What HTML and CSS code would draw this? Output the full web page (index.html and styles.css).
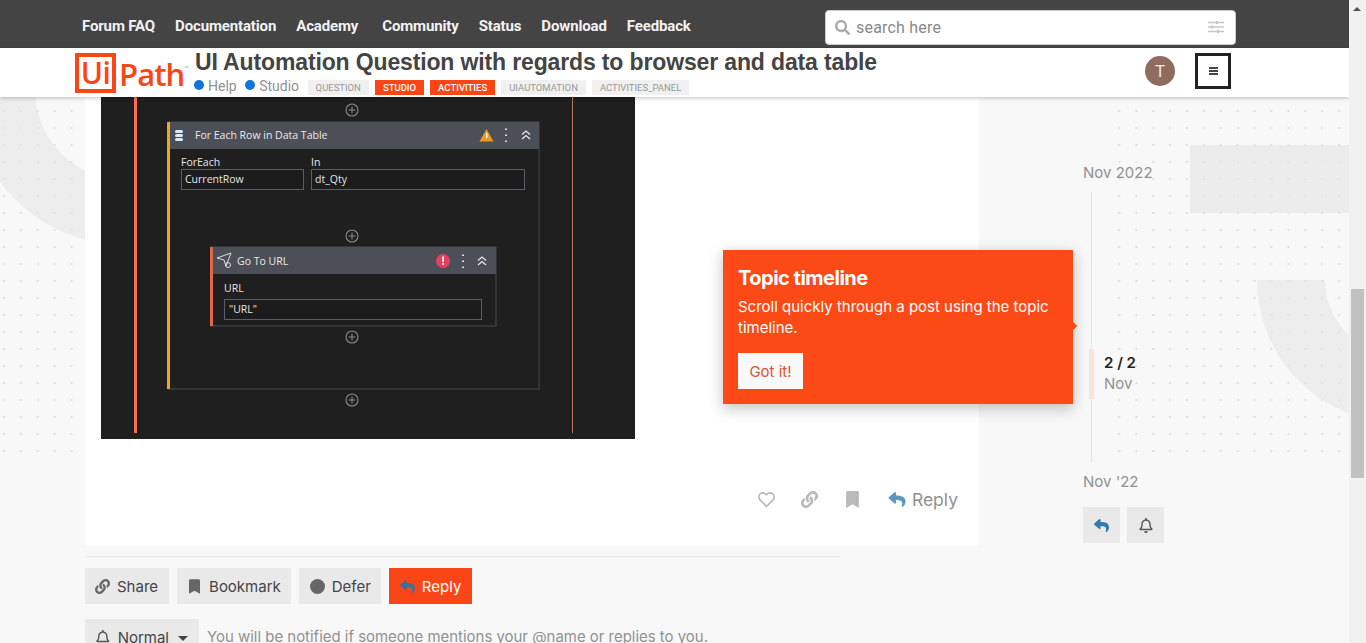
FILE: index.html
```
<!DOCTYPE html>
<html lang="en">
<head>
  <meta charset="UTF-8" />
  <title>UI Automation Question with regards to browser and data table</title>
  <link rel="stylesheet" href="styles.css">
</head>
<body>
  <svg class="icon-defs" width="0" height="0">
    <symbol id="i-reply" viewBox="0 0 512 512"><path d="M8.309 189.836L184.313 37.851C199.719 24.546 224 35.347 224 56.015v80.053c160.629 1.839 288 34.032 288 186.258 0 61.441-39.581 122.309-83.333 154.132-13.653 9.931-33.111-2.533-28.077-18.631 45.344-145.012-21.507-183.51-176.59-185.742V360c0 20.7-24.3 31.453-39.687 18.164l-176.004-152c-11.071-9.562-11.086-26.753 0-36.328z"/></symbol>
    <symbol id="i-link" viewBox="0 0 512 512"><path d="M326.612 185.391c59.747 59.809 58.927 155.698.36 214.59-.11.12-.24.25-.36.37l-67.2 67.2c-59.27 59.27-155.699 59.262-214.96 0-59.27-59.26-59.27-155.7 0-214.96l37.106-37.106c9.84-9.84 26.786-3.3 27.294 10.606.648 17.722 3.826 35.527 9.69 52.721 1.986 5.822.567 12.262-3.783 16.612l-13.087 13.087c-28.026 28.026-28.905 73.66-1.155 101.96 28.024 28.579 74.086 28.749 102.325.51l67.2-67.19c28.191-28.191 28.073-73.757 0-101.83-3.701-3.694-7.429-6.564-10.341-8.569a16.037 16.037 0 0 1-6.947-12.606c-.396-10.567 3.348-21.456 11.698-29.806l21.054-21.055c5.521-5.521 14.182-6.199 20.584-1.731a152.482 152.482 0 0 1 20.522 17.197zM467.547 44.449c-59.261-59.262-155.69-59.27-214.96 0l-67.2 67.2c-.12.12-.25.25-.36.37-58.566 58.892-59.387 154.781.36 214.59a152.454 152.454 0 0 0 20.521 17.196c6.402 4.468 15.064 3.789 20.584-1.731l21.054-21.055c8.35-8.35 12.094-19.239 11.698-29.806a16.037 16.037 0 0 0-6.947-12.606c-2.912-2.005-6.64-4.875-10.341-8.569-28.073-28.073-28.191-73.639 0-101.83l67.2-67.19c28.239-28.239 74.3-28.069 102.325.51 27.75 28.3 26.872 73.934-1.155 101.96l-13.087 13.087c-4.35 4.35-5.769 10.79-3.783 16.612 5.864 17.194 9.042 34.999 9.69 52.721.509 13.906 17.454 20.446 27.294 10.606l37.106-37.106c59.271-59.259 59.271-155.699.001-214.959z"/></symbol>
    <symbol id="i-heart" viewBox="0 0 512 512"><path d="M458.4 64.3C400.6 15.7 311.3 23 256 79.3 200.7 23 111.4 15.6 53.6 64.3-21.6 127.6-10.6 230.8 43 285.5l175.4 178.7c10 10.2 23.4 15.9 37.6 15.9 14.3 0 27.6-5.6 37.6-15.8L469 285.6c53.5-54.7 64.7-157.9-10.6-221.3zm-23.6 187.5L259.4 430.5c-2.4 2.4-4.4 2.4-6.8 0L77.2 251.8c-36.5-37.2-43.9-107.6 7.3-150.7 38.9-32.7 98.9-27.8 136.5 10.5l35 35.7 35-35.7c37.8-38.5 97.8-43.2 136.5-10.6 51.1 43.1 43.5 113.9 7.3 150.8z"/></symbol>
    <symbol id="i-bookmark" viewBox="0 0 384 512"><path d="M0 512V48C0 21.49 21.49 0 48 0h288c26.51 0 48 21.49 48 48v464L192 400 0 512z"/></symbol>
    <symbol id="i-bell" viewBox="0 0 448 512"><path d="M439.39 362.29c-19.32-20.76-55.47-51.99-55.47-154.29 0-77.7-54.48-139.9-127.94-155.16V32c0-17.67-14.32-32-31.98-32s-31.98 14.33-31.98 32v20.84C118.56 68.1 64.08 130.3 64.08 208c0 102.3-36.15 133.53-55.47 154.29-6 6.45-8.66 14.16-8.61 21.71.11 16.4 12.98 32 32.1 32h383.8c19.12 0 32-15.6 32.1-32 .05-7.55-2.61-15.27-8.61-21.71zM67.53 368c21.22-27.97 44.42-74.33 44.53-159.42 0-.2-.06-.38-.06-.58 0-61.86 50.14-112 112-112s112 50.14 112 112c0 .2-.06.38-.06.58.11 85.1 23.31 131.46 44.53 159.42H67.53zM224 512c35.32 0 63.97-28.65 63.97-64H160.03c0 35.35 28.65 64 63.97 64z"/></symbol>
    <symbol id="i-search" viewBox="0 0 512 512"><path d="M505 442.7L405.3 343c-4.5-4.5-10.6-7-17-7H372c27.6-35.3 44-79.7 44-128C416 93.1 322.9 0 208 0S0 93.1 0 208s93.1 208 208 208c48.3 0 92.7-16.4 128-44v16.3c0 6.4 2.5 12.5 7 17l99.7 99.7c9.4 9.4 24.6 9.4 33.9 0l28.3-28.3c9.4-9.4 9.4-24.6.1-34zM208 336c-70.7 0-128-57.2-128-128 0-70.7 57.2-128 128-128 70.7 0 128 57.2 128 128 0 70.7-57.2 128-128 128z"/></symbol>
  </svg>

  <!-- page decoration behind everything -->
  <svg class="backdrop" width="1349" height="643" viewBox="0 0 1349 643">
    <defs>
      <pattern id="dots" x="3" y="8" width="16.9" height="17" patternUnits="userSpaceOnUse">
        <rect x="0" y="0" width="2" height="2" fill="#e2e2e2"/>
      </pattern>
    </defs>
    <path d="M125 90m-155 0a155 155 0 1 0 310 0a155 155 0 1 0 -310 0zM125 90m-90 0a90 90 0 1 1 180 0a90 90 0 1 1 -180 0z" fill="#ededed" fill-rule="evenodd"/>
    <rect x="1190" y="145" width="159" height="68" fill="#ececec"/>
    <path d="M1257 280A143 143 0 0 0 1543 280H1475A75 75 0 0 1 1325 280Z" fill="#ededed"/>
    <rect x="0" y="100" width="85" height="352" fill="url(#dots)"/>
    <rect x="1105" y="100" width="244" height="352" fill="url(#dots)"/>
  </svg>

  <div class="top-bar">
    <nav class="top-nav">
      <a>Forum FAQ</a>
      <a>Documentation</a>
      <a class="nav-academy">Academy</a>
      <a>Community</a>
      <a>Status</a>
      <a>Download</a>
      <a>Feedback</a>
    </nav>
    <div class="search-box">
      <svg class="search-icon"><use href="#i-search"/></svg>
      <span class="search-text">search here</span>
      <svg class="search-opts" viewBox="0 0 16 14" width="16" height="14">
        <path d="M0 2.5h16M0 7h16M0 11.5h16" stroke="#c6c6c6" stroke-width="1.4"/>
        <path d="M9 1v3M4 5.5v3M10 10v3" stroke="#c6c6c6" stroke-width="2"/>
      </svg>
    </div>
  </div>

  <header class="topic-bar">
    <div class="logo">
      <span class="logo-ui">Ui</span><span class="logo-path">Path</span><span class="logo-tm">™</span>
    </div>
    <div class="topic-info">
      <h1>UI Automation Question with regards to browser and data table</h1>
      <div class="topic-meta">
        <span class="cat"><i class="cat-dot"></i>Help</span>
        <span class="cat"><i class="cat-dot"></i>Studio</span>
        <span class="tag">QUESTION</span>
        <span class="tag tag-hot">STUDIO</span>
        <span class="tag tag-hot">ACTIVITIES</span>
        <span class="tag">UIAUTOMATION</span>
        <span class="tag">ACTIVITIES_PANEL</span>
      </div>
    </div>
    <div class="avatar">T</div>
    <div class="menu-btn"><span class="burger"></span></div>
  </header>

  <div class="page">
    <main class="post-col">
      <article class="post">
        <svg class="shot" width="534" height="342" viewBox="101 97 534 342">
          <rect x="101" y="97" width="534" height="342" fill="#1f1f20"/>
          <rect x="134" y="97" width="3" height="336" fill="#f8704f"/>
          <rect x="572" y="97" width="1" height="336" fill="#b8755e"/>

          <g class="plus"><circle cx="352" cy="110" r="6"/><path d="M352 106.500v7M348.500 110h7"/></g>
          <rect x="169" y="122" width="370" height="267" fill="#1f1f20" stroke="#484b50"/>
          <rect x="167" y="122" width="3" height="267" fill="#eda81c"/>
          <rect x="170" y="122" width="369" height="27" fill="#4c4f57"/>
          <rect x="173" y="129" width="12" height="13" fill="#3e5270"/>
          <rect x="175" y="130" width="8" height="3" rx="1.500" fill="#e8e8e8"/>
          <rect x="175" y="134" width="8" height="3" rx="1.500" fill="#e8e8e8"/>
          <rect x="175" y="138" width="8" height="3" rx="1.500" fill="#e8e8e8"/>
          <text class="node-title" x="195" y="139">For Each Row in Data Table</text>
          <path d="M486.500 129l7 12.500h-14z" fill="#e99a1f"/>
          <rect x="486" y="133" width="1.500" height="5" fill="#fff"/>
          <path d="M506 128.500v1.500M506 134.500v1.500M506 140.500v1.500" stroke="#ddd" stroke-width="2"/>
          <path class="chev" d="M522 134.500l4-3.500 4 3.500M522 139l4-3.500 4 3.500"/>

          <text class="field-label" x="181" y="166">ForEach</text>
          <rect class="field" x="181.500" y="169.500" width="122" height="20"/>
          <text class="field-value" x="185" y="183">CurrentRow</text>
          <text class="field-label" x="311" y="166">In</text>
          <rect class="field" x="311.500" y="169.500" width="213" height="20"/>
          <text class="field-value" x="315" y="183">dt_Qty</text>

          <g class="plus"><circle cx="352" cy="236" r="6"/><path d="M352 232.500v7M348.500 236h7"/></g>

          <rect x="211" y="247" width="285" height="79" fill="#1f1f20" stroke="#484b50"/>
          <rect x="210" y="247" width="3" height="79" fill="#e2684c"/>
          <rect x="213" y="247" width="283" height="27" fill="#4c4f57"/>
          <path d="M217 258l14-5-5 13-2-6z" fill="none" stroke="#ddd"/>
          <circle cx="228" cy="265" r="2.500" fill="none" stroke="#ddd"/>
          <text class="node-title" x="237" y="265">Go To URL</text>
          <circle cx="443" cy="261" r="7" fill="#e2405c"/>
          <rect x="442.200" y="256.500" width="1.800" height="5.500" fill="#fff"/>
          <rect x="442.200" y="263" width="1.800" height="1.800" fill="#fff"/>
          <path d="M463 254.500v1.500M463 260.500v1.500M463 266.500v1.500" stroke="#ddd" stroke-width="2"/>
          <path class="chev" d="M478 260.500l4-3.500 4 3.500M478 265l4-3.500 4 3.500"/>
          <text class="field-label" x="224" y="292">URL</text>
          <rect class="field" x="224.500" y="299.500" width="257" height="20"/>
          <text class="field-value" x="229" y="313">"URL"</text>

          <g class="plus"><circle cx="352" cy="337" r="6"/><path d="M352 333.500v7M348.500 337h7"/></g>
          <g class="plus"><circle cx="352" cy="400" r="6"/><path d="M352 396.500v7M348.500 400h7"/></g>
        </svg>

        <div class="post-actions">
          <svg class="act act-heart"><use href="#i-heart"/></svg>
          <svg class="act act-link"><use href="#i-link"/></svg>
          <svg class="act act-mark"><use href="#i-bookmark"/></svg>
          <span class="act-reply"><svg class="reply-arrow"><use href="#i-reply"/></svg>Reply</span>
        </div>
      </article>

      <div class="topic-footer">
        <div class="footer-btns">
          <span class="btn"><svg class="btn-icon"><use href="#i-link"/></svg>Share</span>
          <span class="btn btn-mark"><svg class="btn-icon btn-icon-mark"><use href="#i-bookmark"/></svg>Bookmark</span>
          <span class="btn btn-defer"><i class="defer-dot"></i>Defer</span>
          <span class="btn btn-primary"><svg class="btn-icon btn-icon-reply"><use href="#i-reply"/></svg>Reply</span>
        </div>
        <div class="notify-row">
          <span class="btn btn-notify"><svg class="btn-icon btn-icon-bell"><use href="#i-bell"/></svg>Normal<i class="caret"></i></span>
          <span class="notify-text">You will be notified if someone mentions your @name or replies to you.</span>
        </div>
      </div>
    </main>

    <aside class="timeline">
      <div class="tl-date">Nov 2022</div>
      <div class="tl-track">
        <div class="tl-handle">
          <div class="tl-count">2 / 2</div>
          <div class="tl-month">Nov</div>
        </div>
      </div>
      <div class="tl-date tl-date-end">Nov '22</div>
      <div class="tl-btns">
        <span class="tl-btn"><svg class="tl-reply"><use href="#i-reply"/></svg></span>
        <span class="tl-btn"><svg class="tl-bell"><use href="#i-bell"/></svg></span>
      </div>
    </aside>
  </div>

  <div class="tip">
    <h3>Topic timeline</h3>
    <p>Scroll quickly through a post using the topic timeline.</p>
    <span class="tip-btn">Got it!</span>
    <i class="tip-arrow"></i>
  </div>

  <div class="scrollbar">
    <i class="scroll-up"></i>
    <i class="scroll-thumb"></i>
  </div>
</body>
</html>
```
FILE: styles.css
```
html, body { margin:0; padding:0; height:643px; overflow:hidden; }
body { font-family:Inter, "Liberation Sans", sans-serif; background:#f8f8f8; color:#444; position:relative; }
.icon-defs { position:absolute; }
.backdrop { position:absolute; left:0; top:0; }
svg { fill:currentColor; }

/* top dark bar */
.top-bar { position:relative; height:48px; width:1349px; background:#444; display:flex; align-items:center; box-sizing:border-box; padding-left:82px; }
.top-nav { display:flex; gap:20px; width:743px; padding-top:4px; font-family:Roboto, sans-serif; font-weight:700; font-size:15px; color:#f2f2f2; letter-spacing:-.14px; }
.nav-academy { margin-right:4px; }
.search-box { width:411px; height:35px; margin-top:6px; background:#fff; border:1px solid #ccc; border-radius:4px; box-sizing:border-box; display:flex; align-items:center; padding:0 11px 0 9px; }
.search-icon { width:15px; height:15px; color:#aaa; margin-right:6px; }
.search-text { flex:1; font-family:Roboto, sans-serif; font-size:16px; color:#888; letter-spacing:.2px; }

/* topic title bar */
.topic-bar { position:relative; z-index:2; height:49px; width:1349px; background:#fff; box-shadow:0 1px 4px rgba(0,0,0,.25); display:flex; box-sizing:border-box; padding-left:75px; }
.logo { width:120px; height:40px; margin-top:5px; display:flex; align-items:center; color:#fa4616; font-family:"Open Sans", sans-serif; font-weight:600; }
.logo-ui { width:41px; height:40px; box-sizing:border-box; border:4px solid #fa4616; display:flex; align-items:center; justify-content:center; font-size:30px; line-height:32px; letter-spacing:-.5px; }
.logo-path { font-size:31px; margin-left:3px; letter-spacing:-.9px; line-height:36px; margin-top:2px; }
.logo-tm { font-size:5px; align-self:flex-start; margin-top:12px; color:#999; font-weight:400; }
.topic-info { width:950px; }
.topic-info h1 { margin:0; font-family:"Liberation Sans", sans-serif; font-size:23px; letter-spacing:-.14px; line-height:29px; font-weight:700; color:#444; }
.topic-meta { display:flex; align-items:center; height:16px; margin:1px 0 0 -1px; font-family:Roboto, sans-serif; }
.cat { font-size:14px; color:#919191; display:flex; align-items:center; margin-right:8.500px; }
.cat-dot { width:10px; height:10px; border-radius:50%; background:#0e76d8; margin-right:4px; margin-top:-3px; }
.tag { font-size:9.500px; color:#999; background:#f0f0f0; padding:0 8px; height:15px; line-height:16px; margin-right:6px; margin-top:2px; }
.tag-hot { background:#fa4616; color:#fff; font-weight:500; }
.avatar { width:30px; height:30px; border-radius:50%; background:#8e6d5f; color:#f4e9df; font-family:Roboto, sans-serif; font-size:17px; line-height:30px; text-align:center; margin:8px 20px 0 0; }
.menu-btn { width:36px; height:36px; box-sizing:border-box; border:3px solid #222; margin-top:5px; display:flex; align-items:center; justify-content:center; }
.burger { width:9px; height:8px; box-sizing:border-box; border-top:2px solid #444; border-bottom:2px solid #444; position:relative; }
.burger:before { content:""; position:absolute; left:0; right:0; top:1px; height:2px; background:#444; }

/* main two column area */
.page { position:relative; display:flex; padding-left:85px; }
.post-col { width:894px; }
.post { background:#fff; height:449px; border-radius:0 0 4px 4px; padding-left:16px; display:flex; flex-direction:column; }
.shot { display:block; flex:none; }
.node-title { font:500 10.500px "Open Sans", sans-serif; fill:#eaeaea; }
.field-label, .field-value { font:10.500px "Open Sans", sans-serif; fill:#e6e6e6; }
.field { fill:#1c1c1d; stroke:#5b5f63; stroke-width:1; }
.plus circle, .plus path { fill:none; stroke:#8a8a8a; stroke-width:1.100; }
.chev { fill:none; stroke:#e6e6e6; stroke-width:1.300; }

.post-actions { display:flex; justify-content:flex-end; align-items:center; padding:50px 21px 0 0; color:#aaa; }
.act { width:17px; height:17px; color:#b9b9b9; }
.act-heart { margin-right:26px; }
.act-link { margin-right:28px; }
.act-mark { width:13px; height:17px; margin-right:29px; }
.act-reply { display:flex; align-items:center; font-size:17.500px; color:#919191; }
.reply-arrow { width:18px; height:17px; color:#5d97bc; margin-right:6px; }

.topic-footer { padding-top:10px; }
.footer-btns { width:755px; border-top:1px solid #e9e9e9; padding-top:11px; display:flex; gap:8px; }
.btn { display:flex; align-items:center; height:36px; padding:0 11px 0 10px; background:#e9e9e9; color:#444; font-size:15px; box-sizing:border-box; }
.btn-icon { width:15px; height:15px; color:#666; margin-right:7px; }
.btn-mark { padding-right:10px; }
.btn-icon-mark { width:11px; margin-left:2px; margin-right:9px; }
.btn-defer { padding-right:10px; }
.defer-dot { width:15px; height:15px; border-radius:50%; background:#666; margin-right:7px; margin-left:1px; }
.btn-primary { background:#fa4616; color:#fff; padding:0 11px; }
.btn-icon-reply { color:#3d6f97; }
.notify-row { display:flex; align-items:center; margin-top:15px; }
.btn-notify { height:36px; padding-left:11px; margin-right:8px; width:114px; }
.btn-icon-bell { width:14px; color:#555; margin-right:8px; }
.caret { margin-left:9px; margin-top:2px; border:5px solid transparent; border-top-color:#444; border-bottom:0; }
.notify-text { font-size:14.950px; color:#919191; }

/* timeline */
.timeline { margin-left:104px; padding-top:66px; width:100px; }
.tl-date { font-size:15px; line-height:20px; color:#919191; }
.tl-track { height:270px; margin-left:8px; border-left:1px solid #e4e4e4; margin-top:9px; padding-top:157px; box-sizing:border-box; }
.tl-handle { border-left:5px solid #fde0d7; margin-left:-3px; height:50px; padding:3px 0 0 10px; box-sizing:border-box; }
.tl-count { font-size:15px; font-weight:600; color:#222; line-height:22px; }
.tl-month { font-size:15px; line-height:20px; color:#919191; }
.tl-date-end { margin-top:10px; }
.tl-btns { display:flex; gap:7px; margin-top:15px; }
.tl-btn { width:37px; height:36px; background:#e9e9e9; display:flex; align-items:center; justify-content:center; }
.tl-reply { width:15px; height:15px; color:#2f7ab0; }
.tl-bell { width:14px; height:15px; color:#555; }

/* floating tip */
.tip { position:absolute; left:723px; top:250px; width:350px; height:154px; box-sizing:border-box; padding:16px 15px 0; background:#fc4a17; color:#fff; box-shadow:0 4px 14px rgba(0,0,0,.25); z-index:3; }
.tip h3 { margin:0 0 6px; font-size:20px; line-height:24px; font-weight:700; letter-spacing:-.5px; }
.tip p { margin:0; font-size:15px; line-height:21px; }
.tip-btn { display:inline-block; margin-top:15px; width:65px; height:36px; background:#f9f9f9; color:#d8532c; font-size:15px; line-height:37px; text-align:center; }
.tip-arrow { position:absolute; right:-3px; top:73px; width:6px; height:6px; background:#fc4a17; transform:rotate(45deg); }

/* browser scrollbar */
.scrollbar { position:absolute; right:0; top:0; width:17px; height:643px; background:#f1f1f1; z-index:4; }
.scroll-up { position:absolute; left:4px; top:7px; border:4px solid transparent; border-bottom-color:#505050; border-top:0; }
.scroll-thumb { position:absolute; left:2px; top:289px; width:13px; height:189px; background:#c1c1c1; }
```
